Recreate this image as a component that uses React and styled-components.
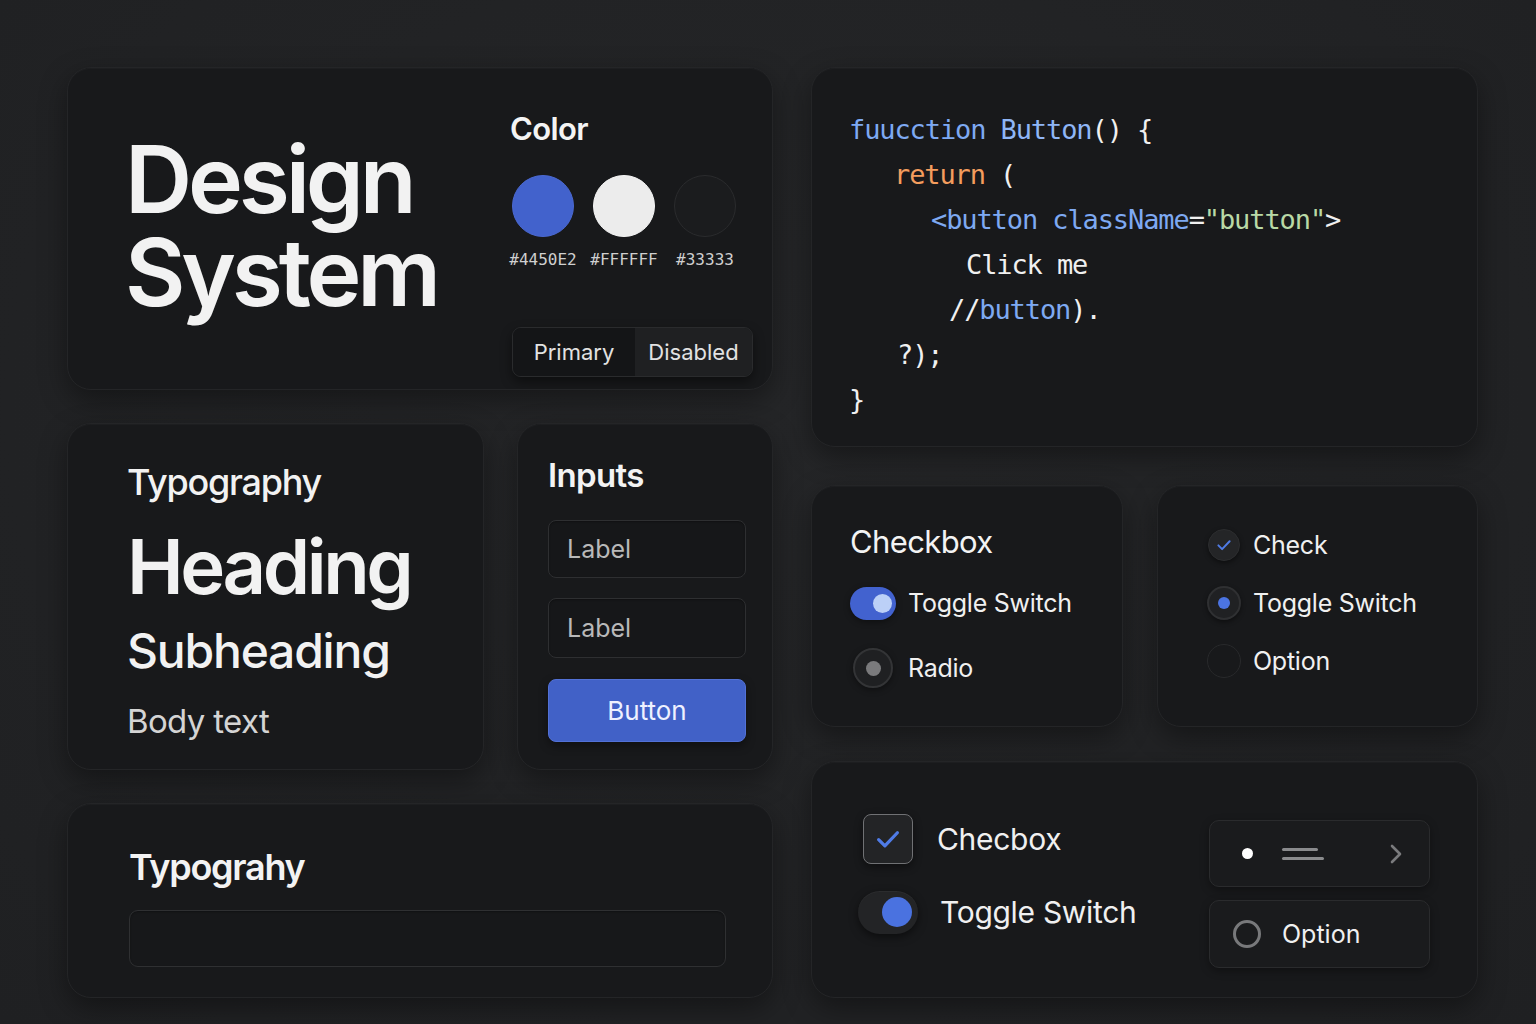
import React from "react";
import styled, { createGlobalStyle } from "styled-components";

const GlobalStyle = createGlobalStyle`
  html, body { margin: 0; padding: 0; background: #222324; }
  body { font-family: Inter, "Noto Sans", sans-serif; color: #f0f0f0; }
  * { box-sizing: border-box; }
`;

const Page = styled.div`
  width: 1536px;
  height: 1024px;
  background: radial-gradient(ellipse at 50% 40%, #252628 0%, #212224 70%, #1f2022 100%);
  display: grid;
  grid-template-columns: 706px 667px;
  column-gap: 38px;
  padding: 67px 0 0 67px;
  align-items: start;
`;

const Column = styled.div`
  display: flex;
  flex-direction: column;
  gap: ${(p) => p.$gap}px;
`;

const Row = styled.div`
  display: flex;
  gap: ${(p) => p.$gap}px;
  margin-top: ${(p) => p.$mt || 0}px;
`;

const Card = styled.div`
  width: ${(p) => p.$w}px;
  height: ${(p) => p.$h}px;
  margin-top: ${(p) => p.$mt || 0}px;
  background: #18191b;
  border: 1px solid #242527;
  border-radius: 24px;
  box-shadow: 0 10px 28px rgba(0, 0, 0, 0.38), inset 0 1px 0 rgba(255, 255, 255, 0.025);
  display: flex;
  flex-direction: ${(p) => p.$dir || "column"};
  overflow: hidden;
`;

/* ---------- Design system card ---------- */
const TitleBlock = styled.div`
  width: 445px;
  padding: 65px 0 0 57px;
`;

const BigTitle = styled.div`
  font-family: Inter, sans-serif;
  font-weight: 600;
  font-size: 93px;
  line-height: 93px;
  height: 93px;
  letter-spacing: -0.045em;
  color: #f2f2f2;
`;

const ColorPanel = styled.div`
  flex: 1;
  display: flex;
  flex-direction: column;
  padding: 42px 19px 12px 0;
`;

const PanelTitle = styled.h2`
  margin: 0;
  font-size: 31px;
  line-height: 37px;
  font-weight: 600;
  letter-spacing: -0.02em;
  color: #f4f4f4;
`;

const Swatches = styled.div`
  display: flex;
  gap: 19px;
  margin-top: 28px;
  padding-left: 2px;
`;

const SwatchCol = styled.div`
  width: 62px;
  display: flex;
  flex-direction: column;
  align-items: center;
  gap: 13px;
`;

const Swatch = styled.div`
  width: 62px;
  height: 62px;
  border-radius: 50%;
  background: ${(p) => p.$color};
  border: 1px solid ${(p) => p.$border};
`;

const Hex = styled.span`
  font-family: "DejaVu Sans Mono", monospace;
  font-size: 16px;
  line-height: 20px;
  color: #cfcfcf;
  white-space: nowrap;
`;

const Segmented = styled.div`
  margin-top: auto;
  margin-left: 2px;
  display: flex;
  height: 50px;
  border-radius: 9px;
  border: 1px solid #2a2b2d;
  overflow: hidden;
  box-shadow: 0 5px 12px rgba(0, 0, 0, 0.45);
`;

const SegItem = styled.div`
  width: ${(p) => p.$w}px;
  background: ${(p) => p.$bg};
  display: flex;
  align-items: center;
  justify-content: center;
  font-size: 22px;
  color: #e2e2e2;
`;

/* ---------- Code card ---------- */
const Code = styled.div`
  padding: 39px 0 0 37px;
  font-family: "DejaVu Sans Mono", monospace;
  font-size: 27px;
  letter-spacing: -1.1px;
`;

const CodeLine = styled.div`
  height: 45px;
  line-height: 45px;
  padding-left: ${(p) => p.$indent}px;
  color: #f0f0f0;
  white-space: pre;
`;

const Tok = styled.span`
  color: ${(p) => p.$c};
`;

/* ---------- Typography card ---------- */
const TypeStack = styled.div`
  display: flex;
  flex-direction: column;
  padding: 36px 0 0 59px;
`;

const TypeLine = styled.div`
  font-size: ${(p) => p.$size}px;
  line-height: ${(p) => p.$lh}px;
  font-weight: ${(p) => p.$weight};
  letter-spacing: ${(p) => p.$ls}em;
  margin-top: ${(p) => p.$mt || 0}px;
  color: ${(p) => p.$color || "#f2f2f2"};
`;

/* ---------- Inputs card ---------- */
const InputsBody = styled.div`
  display: flex;
  flex-direction: column;
  padding: 31px 26px 0 30px;
`;

const CardTitle = styled.h3`
  margin: 0 0 ${(p) => p.$mb}px 0;
  font-size: ${(p) => p.$size}px;
  line-height: 40px;
  font-weight: ${(p) => p.$weight};
  letter-spacing: ${(p) => p.$ls || -0.02}em;
  color: #f3f3f3;
`;

const Field = styled.div`
  height: ${(p) => p.$h}px;
  margin-bottom: ${(p) => p.$mb}px;
  border: 1px solid #2e2f31;
  border-radius: 8px;
  background: #161719;
  display: flex;
  align-items: center;
  padding-left: 18px;
  font-size: 25px;
  color: #b9b9b9;
  box-shadow: inset 0 1px 2px rgba(0, 0, 0, 0.3);
`;

const PrimaryButton = styled.div`
  height: 63px;
  border-radius: 8px;
  background: #4161c7;
  border: 1px solid #5271d6;
  display: flex;
  align-items: center;
  justify-content: center;
  font-size: 26px;
  color: #eef1ff;
  box-shadow: 0 4px 10px rgba(0, 0, 0, 0.4);
`;

/* ---------- Controls ---------- */
const ControlList = styled.div`
  display: flex;
  flex-direction: column;
  gap: ${(p) => p.$gap}px;
  padding: ${(p) => p.$pad};
`;

const ControlRow = styled.div`
  display: flex;
  align-items: center;
  height: ${(p) => p.$h}px;
  gap: ${(p) => p.$gap}px;
  margin-top: ${(p) => p.$mt || 0}px;
  font-size: ${(p) => p.$size}px;
  color: #f0f0f0;
  letter-spacing: -0.01em;
`;

const ControlSlot = styled.div`
  width: ${(p) => p.$w}px;
  display: flex;
  justify-content: center;
  align-items: center;
  flex-shrink: 0;
`;

const TogglePill = styled.div`
  width: ${(p) => p.$w}px;
  height: ${(p) => p.$h}px;
  border-radius: 999px;
  background: ${(p) => p.$bg};
  display: flex;
  align-items: center;
  justify-content: flex-end;
  padding-right: ${(p) => p.$pr}px;
  box-shadow: ${(p) => p.$shadow};
`;

const Knob = styled.div`
  width: ${(p) => p.$d}px;
  height: ${(p) => p.$d}px;
  border-radius: 50%;
  background: ${(p) => p.$bg};
`;

const RoundControl = styled.div`
  width: ${(p) => p.$d}px;
  height: ${(p) => p.$d}px;
  border-radius: 50%;
  background: ${(p) => p.$bg};
  border: ${(p) => p.$border};
  display: flex;
  align-items: center;
  justify-content: center;
  box-shadow: ${(p) => p.$shadow || "none"};
`;

const SquareCheck = styled.div`
  width: 50px;
  height: 50px;
  border-radius: 8px;
  background: #232426;
  border: 1.5px solid #707174;
  display: flex;
  align-items: center;
  justify-content: center;
  box-shadow: 0 3px 8px rgba(0, 0, 0, 0.45);
`;

const BottomBody = styled.div`
  display: flex;
  justify-content: space-between;
  padding: 0 47px 0 46px;
`;

const OptionBoxes = styled.div`
  display: flex;
  flex-direction: column;
  gap: 13px;
  padding-top: 58px;
`;

const OptionBox = styled.div`
  width: 221px;
  height: ${(p) => p.$h}px;
  border-radius: 10px;
  border: 1px solid #2a2b2d;
  background: #1a1b1d;
  box-shadow: 0 3px 8px rgba(0, 0, 0, 0.35);
  display: flex;
  align-items: center;
  padding: ${(p) => p.$pad};
  gap: ${(p) => p.$gap}px;
  font-size: 25px;
  color: #f0f0f0;
`;

const Dot = styled.div`
  width: 11px;
  height: 11px;
  border-radius: 50%;
  background: #ffffff;
`;

const Lines = styled.div`
  display: flex;
  flex-direction: column;
  gap: 6px;
`;

const Bar = styled.div`
  width: ${(p) => p.$w}px;
  height: 3px;
  border-radius: 2px;
  background: #8a8b8d;
`;

const Spacer = styled.div`
  flex: 1;
`;

const Ring = styled.div`
  width: 28px;
  height: 28px;
  border-radius: 50%;
  border: 3px solid #78797b;
`;

const BottomTypeBody = styled.div`
  padding: 43px 0 0 61px;
`;

const WideField = styled.div`
  width: 597px;
  height: 57px;
  margin-top: 3px;
  border: 1px solid #2f3032;
  border-radius: 9px;
  background: #17181a;
  box-shadow: inset 0 1px 2px rgba(0, 0, 0, 0.3);
`;

const CheckIcon = ({ size, stroke }) => (
  <svg width={size} height={size} viewBox="0 0 24 24" fill="none">
    <path d="M4.5 12.5l5 5L19.5 7" stroke="#4f7be6" strokeWidth={stroke} strokeLinecap="round" strokeLinejoin="round" />
  </svg>
);

const Chevron = () => (
  <svg width="14" height="22" viewBox="0 0 14 22" fill="none">
    <path d="M3 3l8 8-8 8" stroke="#7a7b7d" strokeWidth="2.6" strokeLinecap="round" strokeLinejoin="round" />
  </svg>
);

const BLUE = "#7ea9f2";

export default function App() {
  return (
    <>
      <GlobalStyle />
      <Page>
        <Column $gap={33}>
          <Card $w={706} $h={323} $dir="row">
            <TitleBlock>
              <BigTitle>Design</BigTitle>
              <BigTitle>System</BigTitle>
            </TitleBlock>
            <ColorPanel>
              <PanelTitle>Color</PanelTitle>
              <Swatches>
                <SwatchCol>
                  <Swatch $color="#4262cc" $border="#4a68d0" />
                  <Hex>#4450E2</Hex>
                </SwatchCol>
                <SwatchCol>
                  <Swatch $color="#ececec" $border="#f4f4f4" />
                  <Hex>#FFFFFF</Hex>
                </SwatchCol>
                <SwatchCol>
                  <Swatch $color="#1b1c1e" $border="#2a2b2d" />
                  <Hex>#33333</Hex>
                </SwatchCol>
              </Swatches>
              <Segmented>
                <SegItem $w={122} $bg="#141517">Primary</SegItem>
                <SegItem $w={117} $bg="#1f2022">Disabled</SegItem>
              </Segmented>
            </ColorPanel>
          </Card>

          <Row $gap={33}>
            <Card $w={417} $h={347}>
              <TypeStack>
                <TypeLine $size={36} $lh={44} $weight={500} $ls={-0.035}>Typography</TypeLine>
                <TypeLine $size={76} $lh={84} $weight={600} $ls={-0.045} $mt={20}>Heading</TypeLine>
                <TypeLine $size={48} $lh={56} $weight={500} $ls={-0.025} $mt={15}>Subheading</TypeLine>
                <TypeLine $size={33} $lh={40} $weight={400} $ls={-0.02} $mt={22} $color="#d4d4d4">Body text</TypeLine>
              </TypeStack>
            </Card>
            <Card $w={256} $h={347}>
              <InputsBody>
                <CardTitle $size={33} $weight={600} $mb={25}>Inputs</CardTitle>
                <Field $h={58} $mb={20}>Label</Field>
                <Field $h={60} $mb={21}>Label</Field>
                <PrimaryButton>Button</PrimaryButton>
              </InputsBody>
            </Card>
          </Row>

          <Card $w={706} $h={195}>
            <BottomTypeBody>
              <CardTitle $size={36} $weight={600} $ls={-0.035} $mb={23}>Typograhy</CardTitle>
              <WideField />
            </BottomTypeBody>
          </Card>
        </Column>

        <Column $gap={0}>
          <Card $w={667} $h={380}>
            <Code>
              <CodeLine $indent={0}>
                <Tok $c={BLUE}>fuucction</Tok> <Tok $c="#8fb6f6">Button</Tok>() {"{"}
              </CodeLine>
              <CodeLine $indent={45}>
                <Tok $c="#f49d5e">return</Tok> (
              </CodeLine>
              <CodeLine $indent={82}>
                <Tok $c={BLUE}>&lt;button className</Tok>=<Tok $c="#b9d9a6">"button"</Tok>&gt;
              </CodeLine>
              <CodeLine $indent={117}>Click me</CodeLine>
              <CodeLine $indent={100}>
                //<Tok $c={BLUE}>button</Tok>).
              </CodeLine>
              <CodeLine $indent={48}>?);</CodeLine>
              <CodeLine $indent={0}>{"}"}</CodeLine>
            </Code>
          </Card>

          <Row $gap={34} $mt={38}>
            <Card $w={312} $h={242}>
              <ControlList $gap={0} $pad="36px 0 0 38px">
                <CardTitle $size={31} $weight={400} $mb={21}>Checkbox</CardTitle>
                <ControlRow $h={40} $gap={12} $size={25}>
                  <ControlSlot $w={46}>
                    <TogglePill $w={46} $h={33} $bg="#4262cf" $pr={4} $shadow="0 2px 6px rgba(0,0,0,0.4)">
                      <Knob $d={19} $bg="#bcd0f7" />
                    </TogglePill>
                  </ControlSlot>
                  Toggle Switch
                </ControlRow>
                <ControlRow $h={40} $gap={12} $size={25} $mt={25}>
                  <ControlSlot $w={46}>
                    <RoundControl $d={40} $bg="#1f2022" $border="2px solid #333436" $shadow="0 2px 6px rgba(0,0,0,0.4)">
                      <Knob $d={15} $bg="#7a7a7c" />
                    </RoundControl>
                  </ControlSlot>
                  Radio
                </ControlRow>
              </ControlList>
            </Card>
            <Card $w={321} $h={242}>
              <ControlList $gap={18} $pad="39px 0 0 49px">
                <ControlRow $h={40} $gap={12} $size={25}>
                  <ControlSlot $w={34}>
                    <RoundControl $d={32} $bg="#242527" $border="1px solid #2c2d2f" $shadow="0 2px 5px rgba(0,0,0,0.45)">
                      <CheckIcon size={18} stroke={2.6} />
                    </RoundControl>
                  </ControlSlot>
                  Check
                </ControlRow>
                <ControlRow $h={40} $gap={12} $size={25}>
                  <ControlSlot $w={34}>
                    <RoundControl $d={34} $bg="#202123" $border="2px solid #2f3032" $shadow="0 2px 5px rgba(0,0,0,0.45)">
                      <Knob $d={12} $bg="#4b74e2" />
                    </RoundControl>
                  </ControlSlot>
                  Toggle Switch
                </ControlRow>
                <ControlRow $h={40} $gap={12} $size={25}>
                  <ControlSlot $w={34}>
                    <RoundControl $d={34} $bg="#18191b" $border="1.5px solid #28292b" />
                  </ControlSlot>
                  Option
                </ControlRow>
              </ControlList>
            </Card>
          </Row>

          <Card $w={667} $h={237} $mt={34}>
            <BottomBody>
              <ControlList $gap={25} $pad="52px 0 0 0">
                <ControlRow $h={50} $gap={19} $size={30}>
                  <ControlSlot $w={60}>
                    <SquareCheck>
                      <CheckIcon size={30} stroke={2.6} />
                    </SquareCheck>
                  </ControlSlot>
                  Checbox
                </ControlRow>
                <ControlRow $h={46} $gap={22} $size={30}>
                  <ControlSlot $w={60}>
                    <TogglePill $w={60} $h={43} $bg="#232426" $pr={6} $shadow="0 3px 8px rgba(0,0,0,0.5), inset 0 1px 0 rgba(255,255,255,0.04)">
                      <Knob $d={30} $bg="#4a72e0" />
                    </TogglePill>
                  </ControlSlot>
                  Toggle Switch
                </ControlRow>
              </ControlList>
              <OptionBoxes>
                <OptionBox $h={67} $pad="0 26px 0 32px" $gap={29}>
                  <Dot />
                  <Lines>
                    <Bar $w={36} />
                    <Bar $w={42} />
                  </Lines>
                  <Spacer />
                  <Chevron />
                </OptionBox>
                <OptionBox $h={68} $pad="0 0 0 23px" $gap={21}>
                  <Ring />
                  Option
                </OptionBox>
              </OptionBoxes>
            </BottomBody>
          </Card>
        </Column>
      </Page>
    </>
  );
}
